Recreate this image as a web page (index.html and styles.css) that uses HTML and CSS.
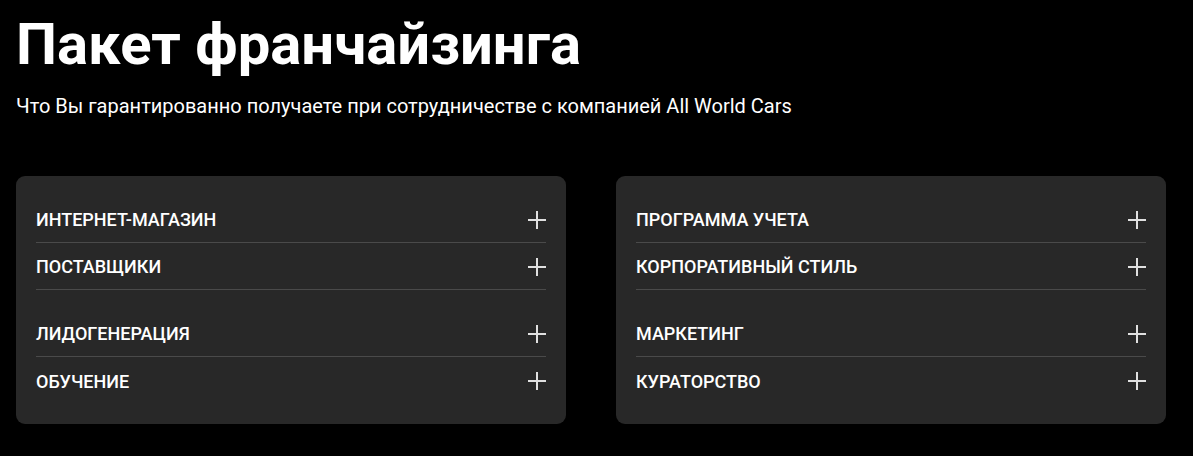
FILE: index.html
```html
<!DOCTYPE html>
<html lang="ru">
<head>
<meta charset="utf-8">
<link rel="stylesheet" href="styles.css">
</head>
<body>
<section class="page">
  <h1 class="title">Пакет франчайзинга</h1>
  <p class="subtitle">Что Вы гарантированно получаете при сотрудничестве с компанией All World Cars</p>
  <div class="cards">
    <div class="card">
      <div class="group">
        <div class="row"><span>Интернет-магазин</span><svg class="plus" viewBox="0 0 18 18"><path d="M9 0V18M0 9H18"/></svg></div>
        <div class="row"><span>Поставщики</span><svg class="plus" viewBox="0 0 18 18"><path d="M9 0V18M0 9H18"/></svg></div>
      </div>
      <div class="group">
        <div class="row"><span>Лидогенерация</span><svg class="plus" viewBox="0 0 18 18"><path d="M9 0V18M0 9H18"/></svg></div>
        <div class="row last"><span>Обучение</span><svg class="plus" viewBox="0 0 18 18"><path d="M9 0V18M0 9H18"/></svg></div>
      </div>
    </div>
    <div class="card">
      <div class="group">
        <div class="row"><span>Программа учета</span><svg class="plus" viewBox="0 0 18 18"><path d="M9 0V18M0 9H18"/></svg></div>
        <div class="row"><span>Корпоративный стиль</span><svg class="plus" viewBox="0 0 18 18"><path d="M9 0V18M0 9H18"/></svg></div>
      </div>
      <div class="group">
        <div class="row"><span>Маркетинг</span><svg class="plus" viewBox="0 0 18 18"><path d="M9 0V18M0 9H18"/></svg></div>
        <div class="row last"><span>Кураторство</span><svg class="plus" viewBox="0 0 18 18"><path d="M9 0V18M0 9H18"/></svg></div>
      </div>
    </div>
  </div>
</section>
</body>
</html>
```
FILE: styles.css
```css
html, body {
  margin: 0;
  padding: 0;
  background: #000;
  color: #fff;
  font-family: Roboto, "Noto Sans", sans-serif;
}
.page {
  padding: 10px 16px 0 16px;
  width: 1150px;
}
.title {
  margin: 0;
  font-size: 58px;
  line-height: 68px;
  font-weight: 700;
}
.subtitle {
  margin: 15px 0 0 0;
  font-size: 20px;
  line-height: 26px;
  font-weight: 400;
}
.cards {
  margin-top: 57px;
  display: grid;
  grid-template-columns: 550px 550px;
  gap: 50px;
}
.card {
  background: #282828;
  border-radius: 9px;
  padding: 20px 20px 20px 20px;
  display: flex;
  flex-direction: column;
  gap: 20px;
}
.row {
  height: 47px;
  box-sizing: border-box;
  display: flex;
  align-items: center;
  justify-content: space-between;
  border-bottom: 1px solid #4a4a4a;
  font-size: 18px;
  font-weight: 500;
  text-transform: uppercase;
  padding-top: 1px;
}
.row.last {
  border-bottom: none;
}
.plus {
  width: 18px;
  height: 18px;
  stroke: #e0e0e0;
  stroke-width: 2;
  fill: none;
}
```
